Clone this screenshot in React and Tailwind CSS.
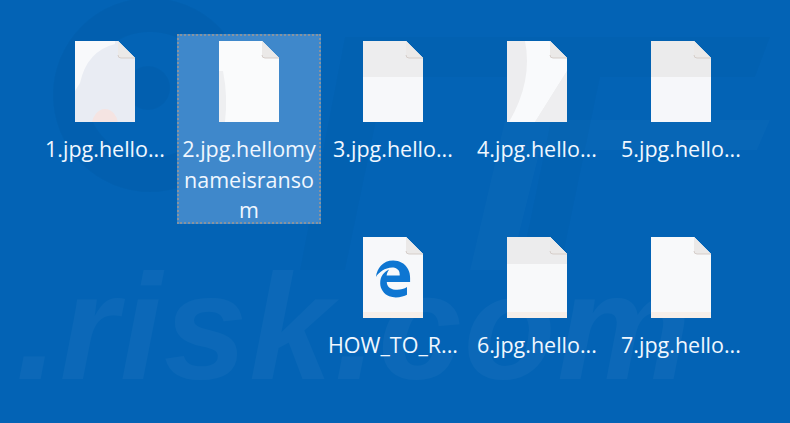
import React from "react";
import { FaEdgeLegacy } from "react-icons/fa6";

const font = "font-['Open_Sans','Noto_Sans',sans-serif]";

const FileIcon = ({ id, children }) => (
  <svg width="60" height="81" viewBox="0 0 60 81" className="block">
    <defs>
      <clipPath id={id}>
        <path d="M0 0H43L60 17V81H0Z" />
      </clipPath>
    </defs>
    <g clipPath={`url(#${id})`}>
      <rect width="60" height="81" fill="#f6f7f9" />
      {children}
    </g>
    <path d="M43 0L60 17H46Q43 17 43 14Z" fill="#ebe9e8" />
    <path d="M43 14Q43 17 46 17H60" fill="none" stroke="#d5cdc9" strokeWidth="1" />
  </svg>
);

const bottomTint = <rect y="75" width="60" height="6" fill="#f7efe9" />;

const files = [
  {
    name: "1.jpg.hello...",
    sheen: (
      <>
        <rect width="60" height="81" fill="#e9ecf3" />
        <path d="M0 0H40V3Q12 10 5 42L0 50Z" fill="#f8f9fb" />
        <ellipse cx="30" cy="84" rx="13" ry="16" fill="#f5e4e2" />
      </>
    ),
  },
  {
    name: ["2.jpg.hellomy", "nameisranso", "m"],
    selected: true,
    sheen: (
      <>
        <rect width="60" height="81" fill="#fafbfc" />
        <path d="M0 30H4Q9 55 6 81H0Z" fill="#eeeff1" />
      </>
    ),
  },
  {
    name: "3.jpg.hello...",
    sheen: (
      <>
        <rect width="60" height="36" fill="#ededee" />
        <rect y="36" width="60" height="45" fill="#f7f8fa" />
      </>
    ),
  },
  {
    name: "4.jpg.hello...",
    sheen: (
      <>
        <rect width="60" height="81" fill="#ededef" />
        <path d="M18 0H42L60 17V30L28 81H2Q26 40 18 0Z" fill="#f9fafc" />
        <path d="M60 30V81H28Z" fill="#eeeef0" />
      </>
    ),
  },
  {
    name: "5.jpg.hello...",
    sheen: (
      <>
        <rect width="60" height="36" fill="#ebebec" />
        <rect y="36" width="60" height="45" fill="#f6f7fa" />
      </>
    ),
  },
  { spacer: true },
  { spacer: true },
  {
    name: "HOW_TO_R...",
    sheen: (
      <>
        <rect width="60" height="81" fill="#f7f8fa" />
        {bottomTint}
      </>
    ),
    edge: true,
  },
  {
    name: "6.jpg.hello...",
    sheen: (
      <>
        <rect width="60" height="81" fill="#f8f9fa" />
        <rect width="60" height="27" fill="#ececed" />
        {bottomTint}
      </>
    ),
  },
  {
    name: "7.jpg.hello...",
    sheen: (
      <>
        <rect width="60" height="81" fill="#f8f9fa" />
        {bottomTint}
      </>
    ),
  },
];

const FileItem = ({ file, index }) => {
  const lines = Array.isArray(file.name) ? file.name : [file.name];
  return (
    <div
      className={`relative flex h-[190px] w-[144px] flex-col items-center pt-[7px] ${
        file.selected ? "bg-[#3f88cb] outline-2 -outline-offset-2 outline-[#87939f] outline-dotted" : ""
      }`}
    >
      <div className="relative">
        <FileIcon id={`clip-${index}`}>{file.sheen}</FileIcon>
        {file.edge && (
          <FaEdgeLegacy className="absolute top-[23px] left-[11px] text-[#0e76d2]" size={38} />
        )}
      </div>
      <div className="mt-[12px] flex flex-col items-center text-[21.5px] leading-[30.5px] whitespace-nowrap text-[#f0f7ff]">
        {lines.map((line) => (
          <span key={line}>{line}</span>
        ))}
      </div>
    </div>
  );
};

const Watermark = () => (
  <div className="pointer-events-none absolute inset-0 overflow-hidden">
    <svg width="790" height="423" viewBox="0 0 790 423" className="absolute inset-0">
      <circle cx="150" cy="95" r="80" fill="none" stroke="#000000" strokeOpacity="0.03" strokeWidth="34" />
      <circle cx="148" cy="88" r="22" fill="#000000" fillOpacity="0.03" />
      <path d="M300 270L345 37H770L755 77H600L560 270H520L560 77H385L345 270Z" fill="#000000" fillOpacity="0.02" />
      <path d="M470 270L505 120H770L757 150H540L510 270Z" fill="#ffffff" fillOpacity="0.02" />
    </svg>
    <span className="absolute top-[241px] left-[16px] font-['Liberation_Sans',sans-serif] text-[150px] leading-[172px] font-bold tracking-[2px] whitespace-nowrap text-white/[0.035] italic">
      .risk.com
    </span>
  </div>
);

const App = () => (
  <div className={`relative h-[423px] w-[790px] overflow-hidden bg-[#0363b5] ${font}`}>
    <Watermark />
    <div className="relative grid grid-cols-[repeat(5,144px)] gap-y-[6px] pt-[34px] pl-[33px]">
      {files.map((file, index) =>
        file.spacer ? <div key={index} /> : <FileItem key={index} file={file} index={index} />
      )}
    </div>
  </div>
);

export default App;
